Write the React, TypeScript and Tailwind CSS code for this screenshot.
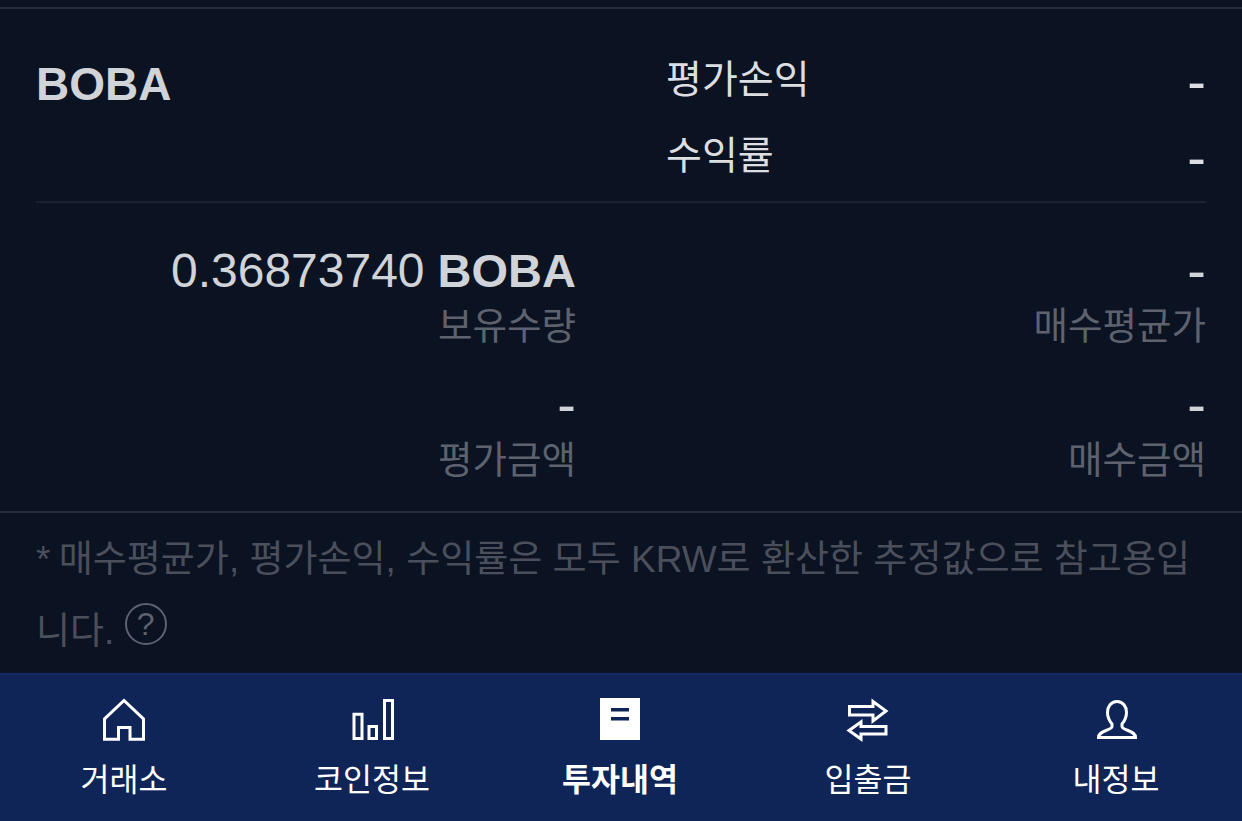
const font = { fontFamily: '"Liberation Sans", "Noto Sans CJK KR", sans-serif' };

function HomeIcon() {
  return (
    <svg width="44" height="44" viewBox="0 0 44 44" fill="none" stroke="#fff" strokeWidth="3">
      <path d="M2.500 41.200V21L22 2.500 41.500 21v20.200H28V29.500H16.500v11.700z" />
    </svg>
  );
}

function ChartIcon() {
  return (
    <svg width="44" height="44" viewBox="0 0 44 44" fill="none" stroke="#fff" strokeWidth="3">
      <path d="M4 16.200h8v24.300H4zM19 28.500h7.500v12H19zM34.500 2.500h8v38h-8z" />
    </svg>
  );
}

function DocIcon() {
  return (
    <svg width="40" height="42" viewBox="0 0 40 42">
      <path fill="#fff" d="M0 0h40v42H0z" />
      <path fill="#0f2557" d="M11 10h18v3.500H11zM11 19h18v3.500H11z" />
    </svg>
  );
}

function SwapIcon() {
  return (
    <svg width="44" height="44" viewBox="0 0 44 44" fill="none" stroke="#fff" strokeWidth="3">
      <path d="M3.500 8.500H27V3.500L40 13 27 23V17H3.500z" />
      <path d="M3 32.500 15 24V28.500H40V36H15V41z" />
    </svg>
  );
}

function UserIcon() {
  return (
    <svg width="44" height="44" viewBox="0 0 44 44" fill="none" stroke="#fff" strokeWidth="3">
      <path d="M23 3.500C17 3.500 13.500 8.500 13.500 14.500 13.500 19.500 15.500 23 18 26V28.500C18 30 16 31 12 32.500 7 34.500 4.500 36 4.500 39.500H41.500C41.500 36 39 34.500 34 32.500 30 31 28 30 28 28.500V26C30.500 23 32.500 19.500 32.500 14.500 32.500 8.500 29 3.500 23 3.500Z" />
    </svg>
  );
}

function Stat({ value, label, unit }: { value: string; label: string; unit?: string }) {
  return (
    <div className="flex flex-col items-end">
      {unit ? (
        <div className="h-[52px] text-[48px] leading-[52px] text-[#d0d3d7] whitespace-nowrap">
          {value}
          <b className="font-bold text-[47px]"> {unit}</b>
        </div>
      ) : (
        <div className="h-[52px] text-[56px] leading-[52px] text-[#d0d3d7]">{value}</div>
      )}
      <div className="mt-[4px] text-[37.500px] leading-[50px] text-[#5d626e] whitespace-nowrap">{label}</div>
    </div>
  );
}

const tabs = [
  { label: "거래소", icon: <HomeIcon /> },
  { label: "코인정보", icon: <ChartIcon /> },
  { label: "투자내역", icon: <DocIcon />, active: true },
  { label: "입출금", icon: <SwapIcon /> },
  { label: "내정보", icon: <UserIcon /> },
];

export default function App() {
  return (
    <div className="flex flex-col w-full h-[821px] overflow-hidden bg-[#0b1222]" style={font}>
      <div className="h-[9px] shrink-0 border-b-2 border-[#262c3d]" />

      <div className="shrink-0 mx-[36px] h-[194px] flex border-b-2 border-[#1b2133]">
        <div className="w-[630px] pt-[49px] text-[46px] leading-[52px] font-bold text-[#d0d3d7]">BOBA</div>
        <div className="flex-1 pt-[45px] text-[39px] leading-[52px] text-[#dcdee1]">
          <div className="flex justify-between h-[76px]">
            <span>평가손익</span>
            <span className="text-[56px] mt-[2px]">-</span>
          </div>
          <div className="flex justify-between">
            <span>수익률</span>
            <span className="text-[56px] mt-[2px]">-</span>
          </div>
        </div>
      </div>

      <div className="shrink-0 h-[308px] mx-[36px] pt-[42px] grid grid-cols-[540px_1fr] content-start gap-y-[28px]">
        <Stat value="0.36873740" unit="BOBA" label="보유수량" />
        <Stat value="-" label="매수평균가" />
        <Stat value="-" label="평가금액" />
        <Stat value="-" label="매수금액" />
      </div>

      <div className="flex-1 border-t-2 border-[#262c3d] px-[36px] pt-[11px] text-[37px] leading-[72px] text-[#4a4f5b]">
        <span className="mr-[-2px]">*</span> 매수평균가, 평가손익, 수익률은 모두 KRW로 환산한 추정값으로 참고용입
        <br />
        니다.{" "}
        <span className="inline-flex items-center justify-center w-[42px] h-[42px] rounded-full border-2 border-[#5d626e] text-[32px] leading-none text-[#5d626e] align-[9px]">
          ?
        </span>
      </div>

      <nav className="shrink-0 h-[148px] bg-[#0f2557] border-t-2 border-[#13296a] grid grid-cols-5 pr-[2px] pt-[23px]">
        {tabs.map((t) => (
          <div key={t.label} className="flex flex-col items-center text-white">
            <div className="h-[44px] flex items-start justify-center">{t.icon}</div>
            <div className={"mt-[16px] text-[31.500px] leading-[44px] whitespace-nowrap " + (t.active ? "font-bold" : "")}>
              {t.label}
            </div>
          </div>
        ))}
      </nav>
    </div>
  );
}
